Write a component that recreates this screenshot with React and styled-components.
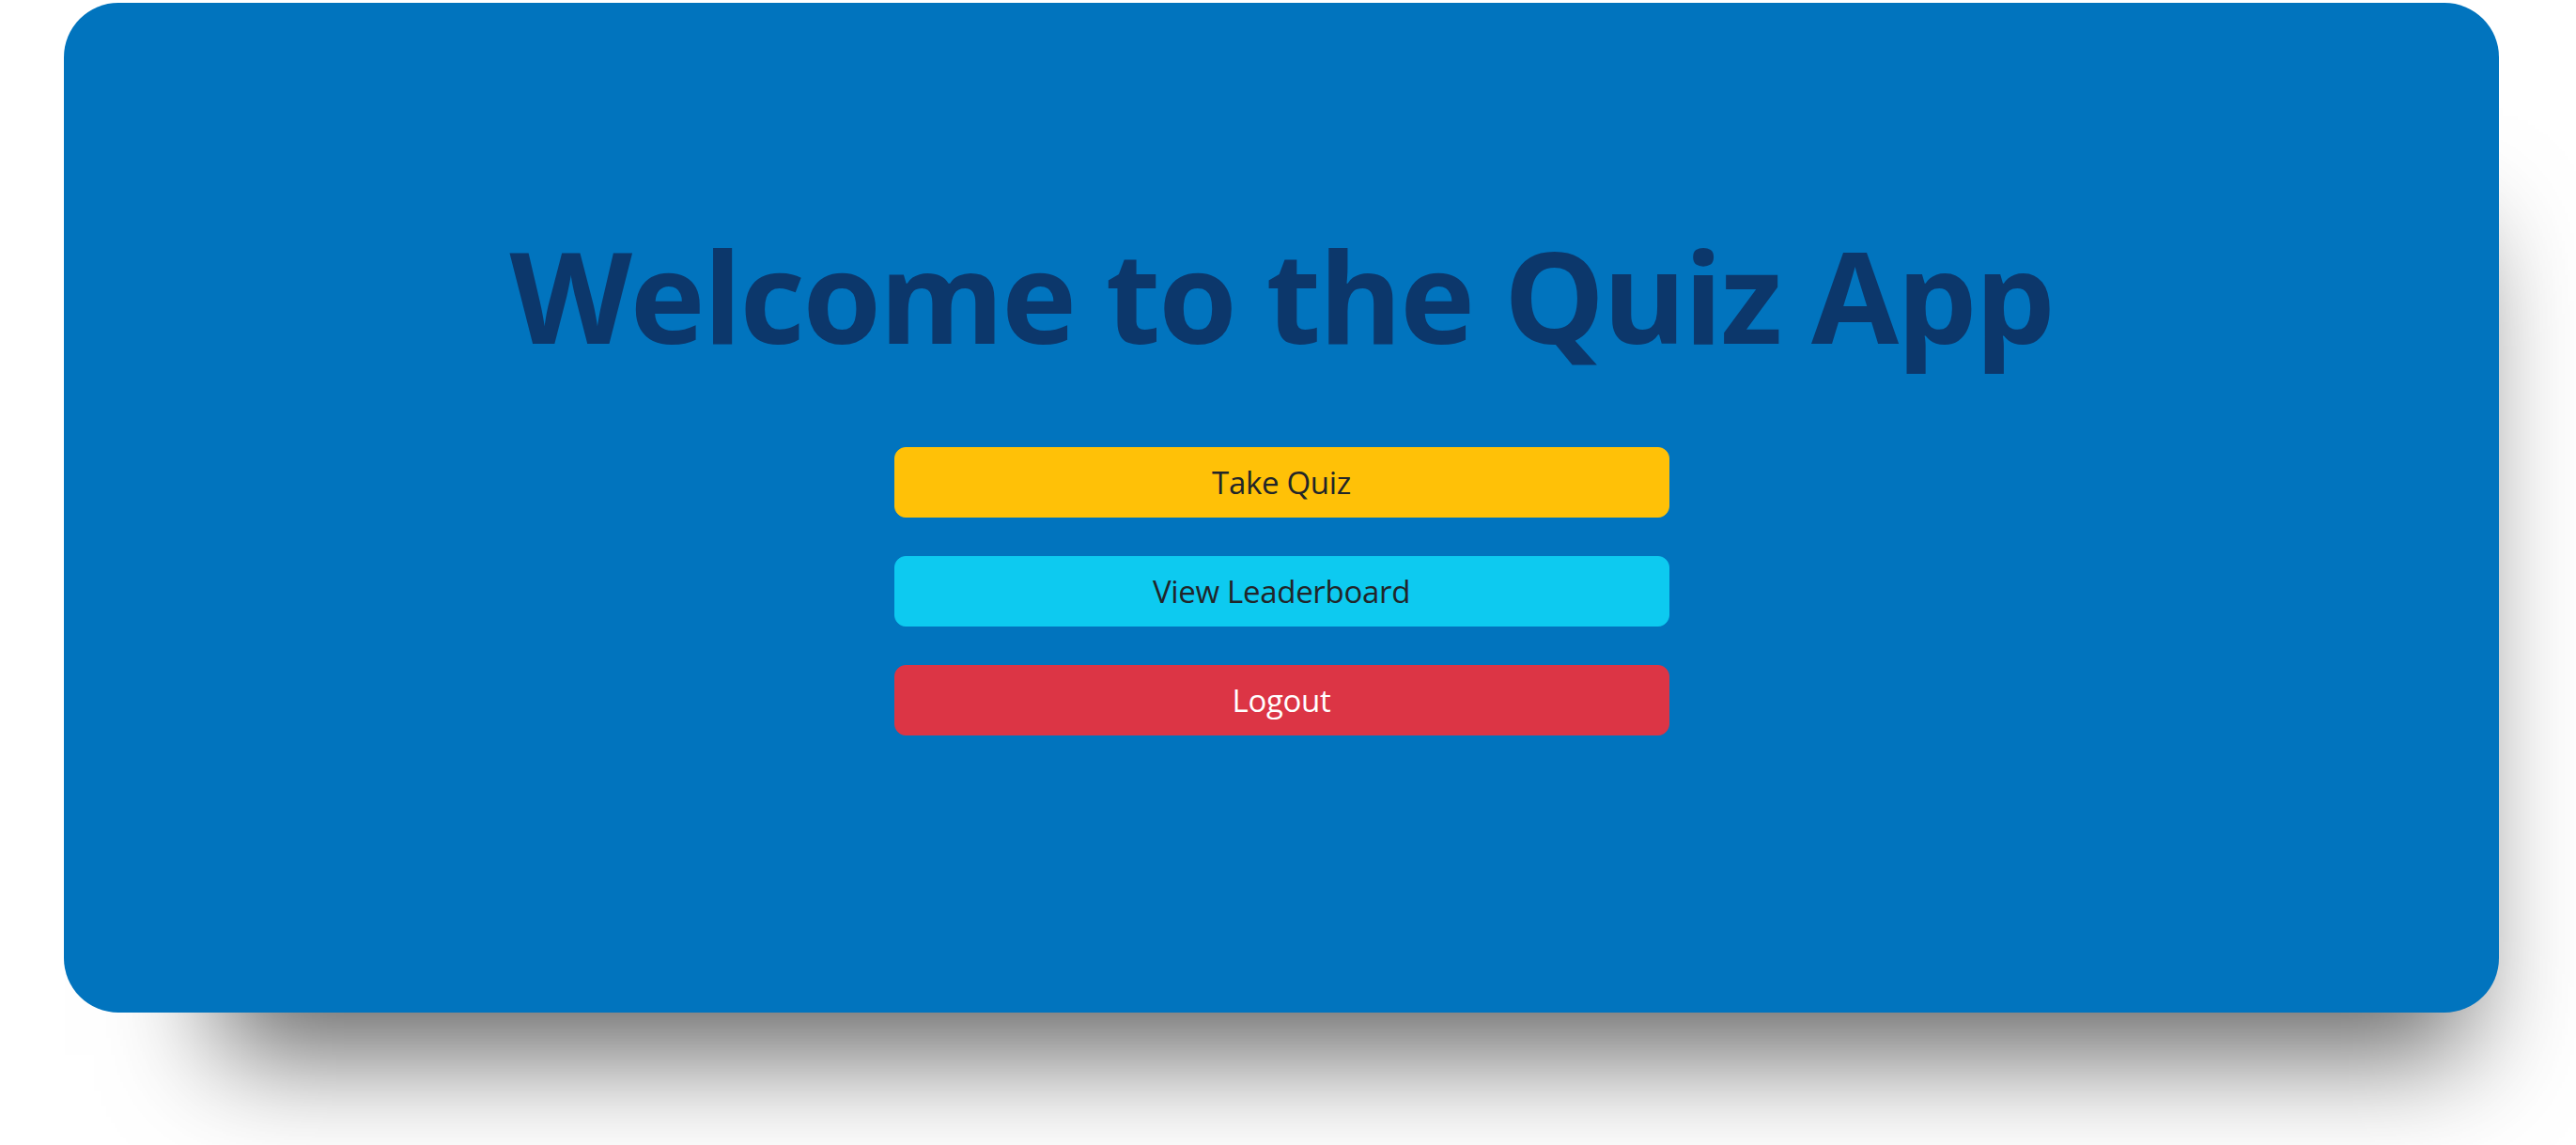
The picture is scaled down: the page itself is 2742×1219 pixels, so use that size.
import React from "react";
import styled, {createGlobalStyle} from "styled-components";

const GlobalStyle = createGlobalStyle`
  html, body {
    margin: 0;
    padding: 0;
    background: #ffffff;
    font-family: "Open Sans", "Noto Sans", "Liberation Sans", sans-serif;
  }
`

const Page = styled('div')`
  width: 2742px;
  height: 1219px;
  padding: 3px 82px 0 68px;
  box-sizing: border-box;
  overflow: hidden;
`

const Card = styled('main')`
  height: 1075px;
  background: #0174be;
  border-radius: 58px;
  box-shadow: 65px 145px 110px -100px rgba(0, 0, 0, 0.6);
  display: flex;
  flex-direction: column;
  align-items: center;
  padding-top: 230px;
  box-sizing: border-box;
`

const Title = styled('h1')`
  margin: 0 0 81px;
  font-size: 135px;
  line-height: 1.2;
  font-weight: 700;
  letter-spacing: -2.2px;
  color: #0c376b;
  white-space: nowrap;
`

const ButtonStack = styled('div')`
  display: flex;
  flex-direction: column;
  gap: 41px;
  width: 825px;
`

const colors = {
  warning: {bg: '#ffc107', fg: '#212529'},
  info: {bg: '#0dcaf0', fg: '#212529'},
  danger: {bg: '#dc3545', fg: '#ffffff'},
}

const ActionButton = styled('button')`
  height: 75px;
  width: 100%;
  border: 1px solid ${props => colors[props.variant].bg};
  border-radius: 12px;
  background: ${props => colors[props.variant].bg};
  color: ${props => colors[props.variant].fg};
  font-family: inherit;
  font-size: 33px;
  font-weight: 400;
  letter-spacing: -0.3px;
  cursor: pointer;
  padding: 0;
`

const App = () => {
  const actions = [
    {label: 'Take Quiz', variant: 'warning'},
    {label: 'View Leaderboard', variant: 'info'},
    {label: 'Logout', variant: 'danger'},
  ]

  return (
    <>
      <GlobalStyle />
      <Page>
        <Card>
          <Title>Welcome to the Quiz App</Title>
          <ButtonStack>
            {actions.map((action, index) => (
              <ActionButton key={index} variant={action.variant}>
                {action.label}
              </ActionButton>
            ))}
          </ButtonStack>
        </Card>
      </Page>
    </>
  )
}

export default App
